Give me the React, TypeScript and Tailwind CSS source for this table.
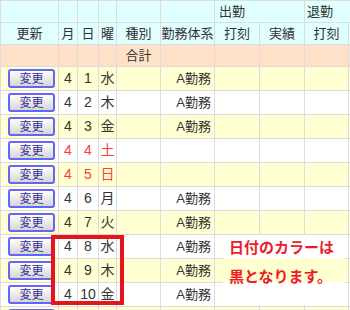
// Attendance list — monthly rows with per-day "変更" buttons and a callout
// pointing out that weekday dates are printed in black.

type Day = { d: number; w: string; kind: string; holiday: boolean }

const DAYS: Day[] = [
  { d: 1, w: '水', kind: 'A勤務', holiday: false },
  { d: 2, w: '木', kind: 'A勤務', holiday: false },
  { d: 3, w: '金', kind: 'A勤務', holiday: false },
  { d: 4, w: '土', kind: '', holiday: true },
  { d: 5, w: '日', kind: '', holiday: true },
  { d: 6, w: '月', kind: 'A勤務', holiday: false },
  { d: 7, w: '火', kind: 'A勤務', holiday: false },
  { d: 8, w: '水', kind: 'A勤務', holiday: false },
  { d: 9, w: '木', kind: 'A勤務', holiday: false },
  { d: 10, w: '金', kind: 'A勤務', holiday: false },
]

const HEAD = 'bg-[#e0ffff] flex items-center justify-center'
const TOTAL = 'bg-[#ffe0c8] flex items-center justify-center'

export default function App() {
  return (
    <div className="relative w-[350px] h-[310px] overflow-hidden bg-white font-['Liberation_Sans','Noto_Sans_CJK_JP',sans-serif] text-[13px] text-[#333]">
      <div className="grid w-max grid-cols-[57px_18px_20px_17px_43px_53px_44px_44px_43px_40px] grid-rows-[21px_21px_21px_repeat(11,23px)] gap-px bg-[#dcdcdc] pl-px pt-px">
        {/* header row 1 */}
        <div className={HEAD} />
        <div className={HEAD} />
        <div className={HEAD} />
        <div className={HEAD} />
        <div className={HEAD} />
        <div className={HEAD} />
        <div className="col-span-2 bg-[#e0ffff] flex items-center pl-[4px]">出勤</div>
        <div className="col-span-2 bg-[#e0ffff] flex items-center pl-[2px]">退勤</div>

        {/* header row 2 */}
        <div className={HEAD}>更新</div>
        <div className={HEAD}>月</div>
        <div className={HEAD}>日</div>
        <div className={HEAD}>曜</div>
        <div className={HEAD}>種別</div>
        <div className={HEAD}>勤務体系</div>
        <div className={HEAD}>打刻</div>
        <div className={HEAD}>実績</div>
        <div className={HEAD}>打刻</div>
        <div className={HEAD} />

        {/* total row */}
        <div className={TOTAL} />
        <div className={TOTAL} />
        <div className={TOTAL} />
        <div className={TOTAL} />
        <div className={TOTAL}>合計</div>
        <div className={TOTAL} />
        <div className={TOTAL} />
        <div className={TOTAL} />
        <div className={TOTAL} />
        <div className={TOTAL} />

        {DAYS.map((day, i) => (
          <DayRow key={day.d} day={day} yellow={i % 2 === 0} />
        ))}

        {/* next row, only its top edge shows below the fold */}
        <div className="bg-[#ffffd2] flex items-start pl-[7px] pt-[2px]">
          <div className="w-[47px] h-[19px] rounded-[3px] border-2 border-[#6464ff] bg-white" />
        </div>
        <div className="bg-[#ffffd2]" />
        <div className="bg-[#ffffd2]" />
        <div className="bg-[#ffffd2]" />
        <div className="bg-[#ffffd2]" />
        <div className="bg-[#ffffd2]" />
        <div className="bg-[#ffffd2]" />
        <div className="bg-[#ffffd2]" />
        <div className="bg-[#ffffd2]" />
        <div className="bg-[#ffffd2]" />
      </div>

      {/* callout covering the grid lines */}
      <div className="absolute left-[223px] top-[235px] w-[122px] flex flex-col">
        <div className="h-[23px] bg-white" />
        <div className="h-[24px] bg-[#ffffd2]" />
        <div className="h-[23px] bg-white" />
      </div>
      <div className="absolute left-[229px] top-[233px] text-[15px] leading-[28.5px] font-bold text-[#ee1c2a] font-['Noto_Sans_CJK_JP',sans-serif]">
        <div>日付のカラーは</div>
        <div>黒となります。</div>
      </div>

      {/* red highlight box */}
      <div className="absolute left-[51px] top-[235px] w-[73px] h-[70px] border-4 border-[#e8141c]" />
    </div>
  )
}

function DayRow({ day, yellow }: { day: Day; yellow: boolean }) {
  const bg = yellow ? 'bg-[#ffffd2]' : 'bg-white'
  const tone = day.holiday ? 'text-[#ff3b3b]' : 'text-[#333]'
  const num = `${bg} ${tone} flex items-center justify-center text-[14px]`

  return (
    <>
      <div className={`${bg} flex items-center pl-[7px]`}>
        <button className="w-[47px] h-[19px] rounded-[3px] border-2 border-[#6464ff] bg-linear-to-b from-white to-[#d6d6d6] text-[12px] leading-none text-[#33339a]">
          変更
        </button>
      </div>
      <div className={num}>4</div>
      <div className={num}>{day.d}</div>
      <div className={num}>{day.w}</div>
      <div className={bg} />
      <div className={`${bg} flex items-center justify-end pr-[3px]`}>{day.kind}</div>
      <div className={bg} />
      <div className={bg} />
      <div className={bg} />
      <div className={bg} />
    </>
  )
}
